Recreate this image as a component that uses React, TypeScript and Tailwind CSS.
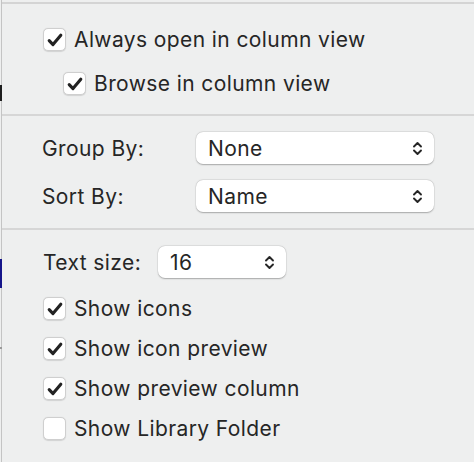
import React from "react";

const font = { fontFamily: "Inter, 'Liberation Sans', sans-serif" };

function Check({ checked }: { checked: boolean }) {
  return (
    <div className="w-[23px] h-[23px] shrink-0 rounded-[5px] bg-white border border-[#cfcfcf] shadow-[0_0.5px_1px_rgba(0,0,0,0.12)] flex items-center justify-center">
      {checked && (
        <svg width="16" height="14" viewBox="0 0 16 14">
          <path d="M2.2 7.6 L6 11.6 L13.8 2.2" fill="none" stroke="#222" strokeWidth="3.1" strokeLinecap="round" strokeLinejoin="round" />
        </svg>
      )}
    </div>
  );
}

function Row({ checked, label, indent }: { checked: boolean; label: string; indent?: boolean }) {
  return (
    <div className={`flex items-center gap-[8px] h-[23px] ${indent ? "pl-[60px]" : "pl-[40px]"}`}>
      <Check checked={checked} />
      <span className="text-[21px] text-[#262626] tracking-[0.4px] leading-none">{label}</span>
    </div>
  );
}

function Chevrons() {
  return (
    <svg width="11" height="15" viewBox="0 0 11 15">
      <path d="M2 5.5 L5.5 2 L9 5.5 M2 9.5 L5.5 13 L9 9.5" fill="none" stroke="#262626" strokeWidth="1.9" strokeLinecap="round" strokeLinejoin="round" />
    </svg>
  );
}

function Select({ value, w }: { value: string; w: string }) {
  return (
    <div className={`${w} h-[32px] bg-white rounded-[7px] shadow-[0_0.5px_1.5px_rgba(0,0,0,0.28),0_0_0_0.5px_rgba(0,0,0,0.06)] flex items-center justify-between pl-[12px] pr-[11px]`}>
      <span className="text-[21px] text-[#262626] tracking-[0.4px] leading-none">{value}</span>
      <Chevrons />
    </div>
  );
}

export default function App() {
  return (
    <div className="w-[474px] h-[462px] bg-[#eeefef] flex overflow-hidden" style={font}>
      <div className="w-[1px] relative shrink-0">
        <div className="absolute left-0 top-[85px] w-[2px] h-[16px] bg-[#1e1e1e]" />
        <div className="absolute left-0 top-[259px] w-[2px] h-[29px] bg-[#15158a]" />
        <div className="absolute left-0 top-[347px] w-[2px] h-[2px] bg-[#9a9a9a]" />
      </div>
      <div className="flex-1 border-l border-[#c4c4c4] pt-[2px]">
        <div className="border-t-2 border-[#d4d4d4] flex flex-col">
          <div className="pt-[24px] pb-[19px] flex flex-col gap-[21px] pl-[1px]">
            <Row checked label="Always open in column view" />
            <Row checked indent label="Browse in column view" />
          </div>
          <div className="h-[2px] bg-[#d6d6d6]" />
          <div className="pt-[16px] pb-[16px] flex flex-col gap-[16px] pl-[40px]">
            <div className="flex items-center">
              <span className="w-[154px] text-[21px] text-[#262626] tracking-[0.4px] leading-none">Group By:</span>
              <Select value="None" w="w-[238px]" />
            </div>
            <div className="flex items-center">
              <span className="w-[154px] text-[21px] text-[#262626] tracking-[0.4px] leading-none">Sort By:</span>
              <Select value="Name" w="w-[238px]" />
            </div>
          </div>
          <div className="h-[2px] bg-[#d6d6d6]" />
          <div className="pt-[16px] flex flex-col pl-[1px]">
            <div className="flex items-center pl-[40px]">
              <span className="w-[115px] text-[21px] text-[#262626] tracking-[0.4px] leading-none">Text size:</span>
              <Select value="16" w="w-[128px]" />
            </div>
            <div className="flex flex-col gap-[17px] mt-[19px]">
              <Row checked label="Show icons" />
              <Row checked label="Show icon preview" />
              <Row checked label="Show preview column" />
              <Row checked={false} label="Show Library Folder" />
            </div>
          </div>
        </div>
      </div>
    </div>
  );
}
